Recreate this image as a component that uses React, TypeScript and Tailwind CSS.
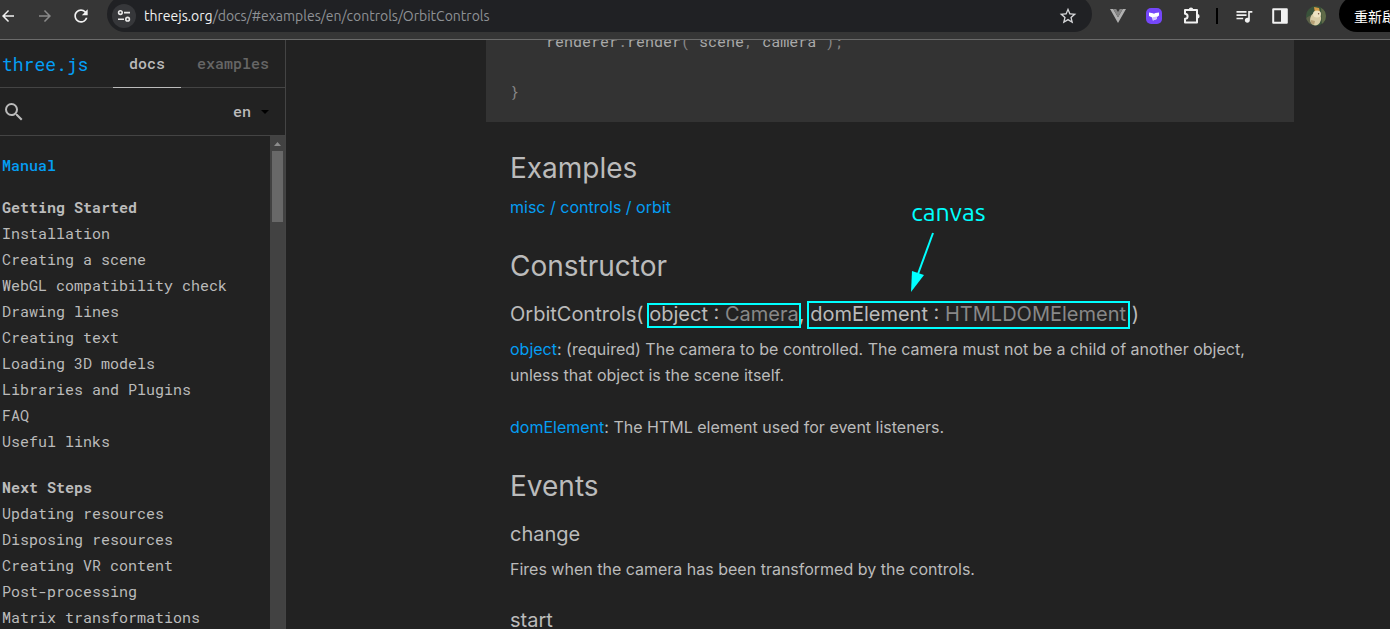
import React from "react";
import {
  MdArrowBack,
  MdArrowForward,
  MdQueueMusic,
  MdRefresh,
  MdSearch,
  MdStarBorder,
} from "react-icons/md";

const sections = [
  {
    title: "Getting Started",
    items: [
      "Installation",
      "Creating a scene",
      "WebGL compatibility check",
      "Drawing lines",
      "Creating text",
      "Loading 3D models",
      "Libraries and Plugins",
      "FAQ",
      "Useful links",
    ],
  },
  {
    title: "Next Steps",
    items: [
      "Updating resources",
      "Disposing resources",
      "Creating VR content",
      "Post-processing",
      "Matrix transformations",
    ],
  },
];

function SiteSettingsIcon() {
  return (
    <svg width="14" height="14" viewBox="0 0 14 14" fill="none" stroke="#e8e8e8" strokeWidth="1.6">
      <circle cx="3.4" cy="3.6" r="1.8" />
      <path d="M7 3.6h6M1 10.2h6" />
      <circle cx="10.6" cy="10.2" r="1.8" />
    </svg>
  );
}

function VueIcon() {
  return (
    <svg width="16" height="14" viewBox="0 0 16 14">
      <path d="M0 0h3.2L8 8.3 12.8 0H16L8 14z" fill="#b0b0b0" />
      <path d="M3.2 0h3L8 3.1 9.8 0h3L8 8.3z" fill="#858585" />
    </svg>
  );
}

function PurpleIcon() {
  return (
    <svg width="16" height="16" viewBox="0 0 16 16">
      <rect width="16" height="16" rx="5" fill="#7547fa" />
      <path d="M3 4.6l3.8.6 1.2.6 1.4-.8 3.6-.6v3.2l-2 1.4v2l-4.2 1.6-.6-3.2L3 8z" fill="#fff" />
      <path d="M6.8 9.2l4.2-.6v2.2l-4 1.6z" fill="#cfc0ff" />
    </svg>
  );
}

function PuzzleIcon() {
  return (
    <svg width="20" height="20" viewBox="0 0 20 20" fill="none" stroke="#f1f1f1" strokeWidth="2" strokeLinejoin="round">
      <path d="M3 4h12v12.4H3v-3.6c1.6 0 2.6-1 2.6-2.5S4.600 7.800 3 7.800z" />
      <path d="M6.800 3.600a2.200 2.200 0 0 1 4.400 0zM15.400 8a2.200 2.200 0 0 1 0 4.400z" fill="#f1f1f1" stroke="none" />
    </svg>
  );
}

function SidePanelIcon() {
  return (
    <svg width="16" height="16" viewBox="0 0 16 16">
      <path d="M1.2 1.2h13.6v13.6H1.2z" fill="none" stroke="#f1f1f1" strokeWidth="2" strokeLinejoin="round" />
      <path d="M9 1h6v14H9z" fill="#f1f1f1" />
    </svg>
  );
}

function Avatar() {
  return (
    <svg width="20" height="20" viewBox="0 0 20 20">
      <defs>
        <clipPath id="avatar-clip">
          <circle cx="10" cy="10" r="10" />
        </clipPath>
      </defs>
      <g clipPath="url(#avatar-clip)">
        <path d="M0 0h20v20H0z" fill="#39523a" />
        <path d="M0 12l5-3 2 8-3 3H0z" fill="#5c6048" />
        <path d="M15 2l5 3v12l-4 3z" fill="#5f6a48" />
        <path d="M8 1l5 1 1 4-5 1z" fill="#d49b45" />
        <ellipse cx="9.6" cy="13" rx="5.400" ry="6.600" fill="#d9cda6" transform="rotate(14 9.6 13)" />
        <ellipse cx="11" cy="8" rx="4" ry="3.600" fill="#eee3c2" />
        <circle cx="12.600" cy="7.800" r=".7" fill="#6d4936" />
        <path d="M5 14l4 1-1 4-3-2z" fill="#b69f74" />
      </g>
    </svg>
  );
}

function BrowserBar() {
  return (
    <header className="flex h-10 shrink-0 items-start overflow-hidden border-b border-[#6b6b6b] bg-[#363636] text-[#f1f1f1]">
      <div className="flex h-8 shrink-0 items-center gap-[19px]">
        <button aria-label="Back" className="-ml-px"><MdArrowBack size={18} /></button>
        <button aria-label="Forward" className="text-[#8a8a8a]"><MdArrowForward size={18} /></button>
        <button aria-label="Reload" className="-ml-0.5"><MdRefresh size={20} /></button>
      </div>
      <div className="-mt-1 ml-4 flex h-9 flex-1 items-center gap-2 rounded-full bg-[#202124] pt-1 pl-[5px] pr-3.5">
        <button aria-label="Site settings" className="flex size-6 items-center justify-center rounded-full bg-[#36373a]">
          <SiteSettingsIcon />
        </button>
        <span className="flex-1 whitespace-nowrap font-['Ubuntu','Noto_Sans',sans-serif] text-sm text-[#8f9296]">
          <span className="text-[#f1f1f1]">threejs.org</span>/docs/#examples/en/controls/OrbitControls
        </span>
        <button aria-label="Bookmark" className="text-[#d5d6d8]"><MdStarBorder size={20} /></button>
      </div>
      <div className="flex h-8 shrink-0 items-center pl-4.5">
        <button aria-label="Vue devtools"><VueIcon /></button>
        <button aria-label="Extension" className="ml-5"><PurpleIcon /></button>
        <button aria-label="Extensions" className="ml-5"><PuzzleIcon /></button>
        <span className="ml-3.5 h-4 w-0.5 bg-black" />
        <button aria-label="Media" className="ml-4"><MdQueueMusic size={20} /></button>
        <button aria-label="Side panel" className="ml-4.5"><SidePanelIcon /></button>
        <button aria-label="Profile" className="ml-4.5"><Avatar /></button>
      </div>
      <button className="-mt-1 ml-[13px] h-9 w-[51px] shrink-0 overflow-hidden whitespace-nowrap rounded-l-full bg-black pt-1 pl-[15px] text-left font-['Noto_Sans_CJK_TC',sans-serif] text-sm text-white">
        重新啟動
      </button>
    </header>
  );
}

function Sidebar() {
  return (
    <aside className="flex w-[286px] shrink-0 flex-col border-r border-[#444] font-['Roboto_Mono','DejaVu_Sans_Mono',monospace] text-[15px] text-[#bbb]">
      <div className="flex h-12 shrink-0 items-stretch border-b border-[#444]">
        <h1 className="w-[113px] pl-0.5 text-lg leading-12 text-[#049ef4]">
          <a href="#home">three.js</a>
        </h1>
        <nav className="flex flex-1 font-medium leading-[46px]">
          <a href="#docs" className="-mb-px border-b border-[#bbb] px-4">docs</a>
          <a href="#examples" className="px-4 text-[#666]">examples</a>
        </nav>
      </div>
      <div className="flex h-12 shrink-0 items-center border-b border-[#444] pl-0.5 pr-3">
        <button aria-label="Search"><MdSearch size={24} /></button>
        <span className="flex-1" />
        <label className="relative flex items-center">
          <span className="sr-only">Language</span>
          <select className="w-10 appearance-none bg-transparent font-medium outline-none" defaultValue="en">
            <option value="en">en</option>
          </select>
          <svg className="pointer-events-none absolute right-1 top-1/2 -translate-y-1/2" width="8" height="4" viewBox="0 0 8 4">
            <path d="M0 0h8L4 4z" fill="#000" />
          </svg>
        </label>
      </div>
      <div className="flex min-h-0 flex-1">
        <nav className="min-w-0 flex-1 overflow-hidden whitespace-nowrap pl-0.5 pt-4 leading-[26px]">
          <h2 className="mb-4 font-medium text-[#049ef4]"><a href="#manual">Manual</a></h2>
          {sections.map((section) => (
            <section key={section.title} className="mb-5">
              <h3 className="font-bold">{section.title}</h3>
              <ul>
                {section.items.map((item) => (
                  <li key={item}><a href="#page">{item}</a></li>
                ))}
              </ul>
            </section>
          ))}
        </nav>
        <div className="flex w-[15px] shrink-0 flex-col items-center bg-[#424242]">
          <svg className="mt-1.5 mb-[5px]" width="7" height="4" viewBox="0 0 7 4">
            <path d="M3.5 0L7 4H0z" fill="#8c8c8c" />
          </svg>
          <div className="h-[71px] w-[11px] bg-[#686868]" />
        </div>
      </div>
    </aside>
  );
}

function Link({ children }: { children: React.ReactNode }) {
  return <a href="#link" className="text-[#049ef4]">{children}</a>;
}

function CanvasNote() {
  return (
    <span className="absolute bottom-full left-[101px] mb-2 flex flex-col text-[25px] leading-8 text-[#0ff]">
      <span className="font-['Ubuntu','Noto_Sans',sans-serif]">canvas</span>
      <svg className="-ml-0.5" width="26" height="64" viewBox="0 0 26 64">
        <path d="M24 5L9 46" stroke="#0ff" strokeWidth="2" />
        <path d="M2 64l1-21 12 4z" fill="#0ff" />
      </svg>
    </span>
  );
}

const heading = "mt-7 text-[28px] leading-9";
const subheading = "mt-4 mb-2 text-xl leading-7";

function Content() {
  return (
    <main className="min-w-0 flex-1 overflow-hidden pl-50 pr-24 font-['Inter',sans-serif] text-base leading-[26px] text-[#bbb]">
      <pre className="-mt-[11px] bg-[#333] px-6 pb-4.5 font-['Roboto_Mono','DejaVu_Sans_Mono',monospace] text-[15px] leading-[25px] text-[#888]">
        {"    "}
        <span className="text-[#aaa]">renderer</span>.<span className="text-[#aaa]">render</span>({" "}
        <span className="text-[#aaa]">scene</span>, <span className="text-[#aaa]">camera</span>
        {" );\n\n}"}
      </pre>
      <div className="px-6">
        <h2 className={heading}>Examples</h2>
        <p className="mt-2"><Link>misc / controls / orbit</Link></p>
        <h2 className={heading}>Constructor</h2>
        <h3 className={subheading}>
          OrbitControls({" "}
          <span className="relative inline-block">
            object : <span className="text-[#888]">Camera</span>
            <span className="absolute -inset-x-0.5 top-[3px] bottom-0 border-2 border-[#0ff]" />
          </span>
          ,{" "}
          <span className="relative inline-block">
            domElement : <span className="text-[#888]">HTMLDOMElement</span>
            <span className="absolute -left-[3px] -right-1 top-px -bottom-px border-2 border-[#0ff]" />
            <CanvasNote />
          </span>{" "}
          )
        </h3>
        <p>
          <Link>object</Link>: (required) The camera to be controlled. The camera must not be a child of
          another object, unless that object is the scene itself.
        </p>
        <p className="mt-[26px]"><Link>domElement</Link>: The HTML element used for event listeners.</p>
        <h2 className={heading}>Events</h2>
        <h3 className={subheading}>change</h3>
        <p className="mb-6">Fires when the camera has been transformed by the controls.</p>
        <h3 className={subheading}>start</h3>
      </div>
    </main>
  );
}

export default function App() {
  return (
    <div className="flex h-screen flex-col overflow-hidden bg-[#222]">
      <BrowserBar />
      <div className="flex min-h-0 flex-1">
        <Sidebar />
        <Content />
      </div>
    </div>
  );
}
